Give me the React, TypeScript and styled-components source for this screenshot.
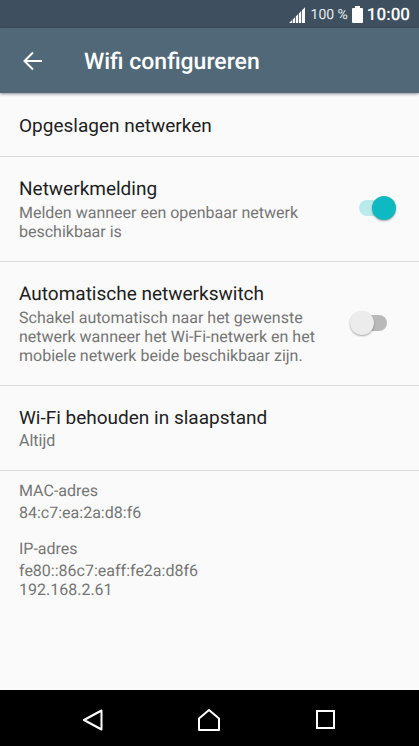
import React from "react";
import styled, { createGlobalStyle } from "styled-components";

const Global = createGlobalStyle`
  * { box-sizing: border-box; }
  body {
    margin: 0;
    font-family: Roboto, sans-serif;
    text-rendering: geometricPrecision;
    background: #fafafa;
  }
`;

const Screen = styled.div`
  min-height: 100vh;
  display: flex;
  flex-direction: column;
  background: #fafafa;
`;

const StatusBar = styled.div`
  height: 28px;
  background: #3e5060;
  color: #fff;
  display: flex;
  align-items: center;
  justify-content: flex-end;
  gap: 4px;
  padding: 1px 9px 0;
`;

const BatteryLevel = styled.span`
  font-size: 14px;
  line-height: 20px;
  color: #e6eaec;
  margin-left: 2px;
`;

const Clock = styled.time`
  font-size: 17px;
  line-height: 20px;
  font-weight: 500;
`;

const AppBar = styled.header`
  height: 65px;
  background: #506878;
  color: #fff;
  display: flex;
  align-items: center;
  gap: 39px;
  padding: 2px 20px 0;
  box-shadow: 0 1px 3px rgba(0, 0, 0, 0.45);
`;

const IconButton = styled.button`
  border: 0;
  background: none;
  padding: 0;
  color: inherit;
  display: flex;
  align-items: center;
  justify-content: center;
`;

const Title = styled.h1`
  margin: 0;
  font-size: 23px;
  font-weight: 500;
  line-height: 28px;
`;

const List = styled.main`
  flex: 1;
`;

const Row = styled.div`
  display: flex;
  align-items: center;
  justify-content: space-between;
  padding: 18px 23px 20px 19px;
  border-bottom: 1px solid #dcdcdc;
`;

const LinkRow = styled.button<{ $single?: boolean }>`
  display: flex;
  flex-direction: column;
  width: 100%;
  border: 0;
  border-bottom: 1px solid #dcdcdc;
  background: none;
  font-family: inherit;
  text-align: left;
  padding: ${(p) => (p.$single ? "19px 19px 17px" : "18px 19px 20px")};
`;

const RowText = styled.label`
  display: flex;
  flex-direction: column;
  flex: 0 1 304px;
  gap: 1px;
`;

const Name = styled.span`
  font-size: 19px;
  line-height: 27px;
  color: #212121;
`;

const Detail = styled.span`
  font-size: 16px;
  line-height: 19px;
  color: #757575;
`;

const Switch = styled.input`
  appearance: none;
  flex: none;
  margin: 0;
  width: 46px;
  height: 24px;
  display: flex;
  align-items: center;
  position: relative;

  &::before {
    content: "";
    width: 28px;
    height: 16px;
    margin: 0 auto;
    border-radius: 8px;
    background: #b9b9b9;
  }
  &::after {
    content: "";
    position: absolute;
    left: 0;
    width: 24px;
    height: 24px;
    border-radius: 50%;
    background: #ececec;
    box-shadow: 0 1px 2px rgba(0, 0, 0, 0.35);
  }
  &:checked::before {
    background: #b9ebed;
  }
  &:checked::after {
    left: auto;
    right: 0;
    background: #0fb9c1;
  }
`;

const Info = styled.dl`
  margin: 0;
  padding: 10px 19px;
  display: flex;
  flex-direction: column;
  gap: 17px;
  font-size: 16px;
  line-height: 19px;
  color: #757575;
`;

const InfoGroup = styled.div`
  display: flex;
  flex-direction: column;
`;

const Term = styled.dt`
  margin-bottom: 3px;
`;

const Value = styled.dd`
  margin: 0;
`;

const Nav = styled.nav`
  height: 56px;
  background: #000;
  color: #fff;
  display: flex;
  align-items: center;
  justify-content: center;
  gap: 92px;
  padding: 4px 2px 0 0;
`;

const SignalIcon = () => (
  <svg width="16" height="16" viewBox="0 0 16 16" fill="#fff" aria-hidden="true">
    <path d="M0 16L3 13.2V16zM3.7 16V12.4L6 10.2V16zM6.8 16V9.4L9.2 7V16zM10 16V6.2L12.2 4V16zM13 16V3.2L16 0.2V16z" />
  </svg>
);

const BatteryIcon = () => (
  <svg width="11" height="17" viewBox="0 0 11 17" fill="#fff" aria-hidden="true">
    <path d="M3 0h5v2h2a1 1 0 0 1 1 1v13a1 1 0 0 1-1 1H1a1 1 0 0 1-1-1V3a1 1 0 0 1 1-1h2z" />
  </svg>
);

const stroke = { fill: "none", stroke: "currentColor", strokeWidth: 2 };

export default function App() {
  return (
    <Screen>
      <Global />
      <StatusBar>
        <SignalIcon />
        <BatteryLevel>100 %</BatteryLevel>
        <BatteryIcon />
        <Clock>10:00</Clock>
      </StatusBar>
      <AppBar>
        <IconButton aria-label="Terug">
          <svg width="25" height="24" viewBox="0 0 25 24" {...stroke}>
            <path d="M22 11H5M13 2.5L4.5 11L13 19.5" />
          </svg>
        </IconButton>
        <Title>Wifi configureren</Title>
      </AppBar>
      <List>
        <LinkRow $single>
          <Name>Opgeslagen netwerken</Name>
        </LinkRow>
        <Row>
          <RowText htmlFor="melding">
            <Name>Netwerkmelding</Name>
            <Detail>Melden wanneer een openbaar netwerk beschikbaar is</Detail>
          </RowText>
          <Switch id="melding" type="checkbox" role="switch" defaultChecked />
        </Row>
        <Row>
          <RowText htmlFor="switch">
            <Name>Automatische netwerkswitch</Name>
            <Detail>
              Schakel automatisch naar het gewenste netwerk wanneer het
              Wi-Fi-netwerk en het mobiele netwerk beide beschikbaar zijn.
            </Detail>
          </RowText>
          <Switch id="switch" type="checkbox" role="switch" />
        </Row>
        <LinkRow>
          <Name>Wi-Fi behouden in slaapstand</Name>
          <Detail>Altijd</Detail>
        </LinkRow>
        <Info>
          <InfoGroup>
            <Term>MAC-adres</Term>
            <Value>84:c7:ea:2a:d8:f6</Value>
          </InfoGroup>
          <InfoGroup>
            <Term>IP-adres</Term>
            <Value>fe80::86c7:eaff:fe2a:d8f6</Value>
            <Value>192.168.2.61</Value>
          </InfoGroup>
        </Info>
      </List>
      <Nav>
        <IconButton aria-label="Vorige">
          <svg width="24" height="24" viewBox="0 0 24 24" {...stroke}>
            <path d="M20.5 2.5v19L3 12z" strokeLinejoin="round" />
          </svg>
        </IconButton>
        <IconButton aria-label="Startscherm">
          <svg width="24" height="24" viewBox="0 0 24 24" {...stroke}>
            <path d="M2 22V10.5L12 2L22 10.5V22z" strokeLinejoin="round" />
          </svg>
        </IconButton>
        <IconButton aria-label="Overzicht">
          <svg width="24" height="24" viewBox="0 0 24 24" {...stroke}>
            <rect x="4" y="3" width="17" height="17" />
          </svg>
        </IconButton>
      </Nav>
    </Screen>
  );
}
